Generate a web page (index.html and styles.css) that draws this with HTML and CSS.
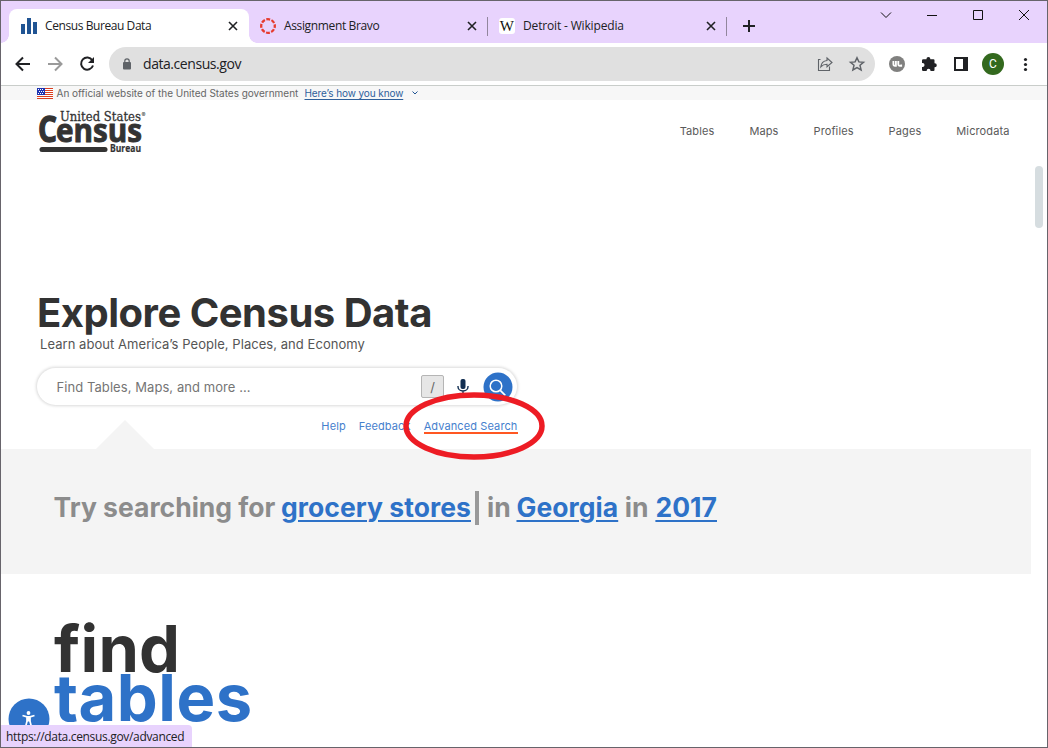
FILE: index.html
```html
<!DOCTYPE html>
<html lang="en">
<head>
<meta charset="utf-8">
<title>Census Bureau Data</title>
<link rel="stylesheet" href="styles.css">
</head>
<body>
<div class="window">
  <div class="tabstrip">
    <div class="tab tab-active">
      <svg class="favicon" viewBox="0 0 16 16"><path fill="#205493" d="M0 6h4v10H0zM6 0h4v16H6zM12 4h4v12h-4z"/></svg>
      <span class="tab-title t1">Census Bureau Data</span>
      <svg class="close" viewBox="0 0 10 10"><path d="M1 1l8 8M9 1l-8 8"/></svg>
    </div>
    <div class="tab">
      <svg class="favicon" viewBox="0 0 16 16"><circle cx="8" cy="8" r="6.8" fill="none" stroke="#e63b2e" stroke-width="2.300" stroke-dasharray="3.900 1.440" stroke-dashoffset="1.950"/></svg>
      <span class="tab-title t2">Assignment Bravo</span>
      <svg class="close" viewBox="0 0 10 10"><path d="M1 1l8 8M9 1l-8 8"/></svg>
      <i class="sep"></i>
    </div>
    <div class="tab">
      <span class="favicon wiki">W</span>
      <span class="tab-title t3">Detroit - Wikipedia</span>
      <svg class="close" viewBox="0 0 10 10"><path d="M1 1l8 8M9 1l-8 8"/></svg>
      <i class="sep"></i>
    </div>
    <svg class="plus" viewBox="0 0 12 12"><path d="M6 0v12M0 6h12" stroke="#202124" stroke-width="2"/></svg>
    <div class="controls">
      <svg viewBox="0 0 46 30"><path d="M18 12.500l5 5 5-5"/></svg>
      <svg viewBox="0 0 46 30"><path d="M18 15.500h10"/></svg>
      <svg viewBox="0 0 46 30"><path d="M18.500 10.500h9v9h-9z"/></svg>
      <svg viewBox="0 0 46 30"><path d="M18 10l10 10M28 10l-10 10"/></svg>
    </div>
  </div>
  <div class="toolbar">
    <svg class="tool" viewBox="0 0 32 32"><path fill="none" stroke="#202124" stroke-width="2" d="M23 16H10.500M16 9.500L9.500 16l6.500 6.500"/></svg>
    <svg class="tool" viewBox="0 0 32 32"><path fill="none" stroke="#9a9a9a" stroke-width="2" d="M9 16h12.500M16 9.500l6.500 6.500-6.500 6.500"/></svg>
    <svg class="tool" viewBox="0 0 32 32"><path fill="none" stroke="#202124" stroke-width="2" d="M21.300 12.200A6.100 6.100 0 1 0 22 17.500"/><path fill="#202124" d="M23 9v6h-6z"/></svg>
    <div class="omnibox">
      <svg class="lock" viewBox="0 0 10 12"><rect x="1" y="4" width="8" height="7.500" rx="1" fill="#5f6368"/><path d="M2.800 4.500V3a2.200 2.200 0 0 1 4.400 0v1.500" fill="none" stroke="#5f6368" stroke-width="1.200"/></svg>
      <span class="url">data.census.gov</span>
      <svg class="tool" viewBox="0 0 32 32"><path fill="none" stroke="#5f6368" stroke-width="1.100" d="M11.500 11.500H9.500v11h11v-4M18 10l5 4.500-5 4.200v-2.400c-3 0-4.500.7-6.200 2.600.4-3.600 2.300-5.900 6.200-6.400z"/></svg>
      <svg class="tool" viewBox="0 0 32 32"><path fill="none" stroke="#5f6368" stroke-width="1.500" d="M16 9.700l1.900 4.200 4.600.4-3.500 3 1.100 4.600-4.100-2.400-4.100 2.400 1.100-4.600-3.500-3 4.600-.4z"/></svg>
    </div>
    <svg class="tool" viewBox="0 0 32 32"><circle cx="16" cy="16" r="8" fill="#80807f"/><path fill="none" stroke="#fff" stroke-width="1.800" d="M12.400 13v3q0 1.900 1.600 1.900M14.900 13v4.900H13.800M17.300 13v3q0 1.900 1.600 1.900h1.300v-1.400"/></svg>
    <svg class="tool" viewBox="0 0 32 32"><path fill="#202124" d="M10.300 11.300h3.200v-.5a1.900 1.900 0 0 1 3.800 0v.5h3.200q1 0 1 1v2.900h.3a2 2 0 0 1 0 4h-.3v2.900q0 1-1 1h-3v-.5a1.900 1.900 0 0 0-3.800 0v.5h-3.400q-1.300 0-1.300-1.300v-2.900h.6a1.950 1.950 0 0 0 0-3.900H9v-2.400q0-1.300 1.300-1.300z"/></svg>
    <svg class="tool" viewBox="0 0 32 32"><path fill="#202124" fill-rule="evenodd" d="M9 9h14v14H9zM11 11v10h7V11z"/></svg>
    <div class="tool"><span class="avatar">C</span></div>
    <svg class="tool" viewBox="0 0 32 32"><g fill="#202124"><circle cx="16.500" cy="11.500" r="1.600"/><circle cx="16.500" cy="16.500" r="1.600"/><circle cx="16.500" cy="21.500" r="1.600"/></g></svg>
  </div>
  <div class="gov">
    <svg class="flag" viewBox="0 0 16 11"><path fill="#fff" d="M0 0h16v11H0z"/><path stroke="#db3e1f" d="M0 .5h16M0 2.500h16M0 4.500h16M0 6.500h16M0 8.500h16M0 10.500h16"/><path fill="#1e33b1" d="M0 0h8v7H0z"/><path stroke="#fff" stroke-dasharray="1 1" d="M1 1.500h6M2 3.500h5M1 5.500h6"/></svg>
    <span class="gov-text">An official website of the United States government</span>
    <a class="gov-link">Here’s how you know</a>
    <svg class="chev" viewBox="0 0 6 4"><path d="M.5.500L3 3 5.500.5" fill="none" stroke="#205493"/></svg>
  </div>
  <header class="site-head">
    <svg class="logo" viewBox="0 0 110 50" role="img" aria-label="United States Census Bureau">
      <text class="logo-us" x="22" y="16.500" textLength="81" lengthAdjust="spacingAndGlyphs">United States</text>
      <text class="logo-r" x="103.500" y="12.500">®</text>
      <text class="logo-c" x="0" y="38" textLength="19" lengthAdjust="spacingAndGlyphs">C</text>
      <text class="logo-census" x="18" y="38" textLength="86" lengthAdjust="spacingAndGlyphs">ensus</text>
      <text class="logo-b" x="72" y="47.700" textLength="31" lengthAdjust="spacingAndGlyphs">Bureau</text>
      <rect x="1.500" y="43" width="68" height="5" rx="2.500"/>
    </svg>
    <nav class="nav"><a>Tables</a><a>Maps</a><a>Profiles</a><a>Pages</a><a>Microdata</a></nav>
  </header>
  <main>
    <section class="hero">
      <h1>Explore Census Data</h1>
      <p class="sub">Learn about America’s People, Places, and Economy</p>
      <div class="search">
        <span class="placeholder">Find Tables, Maps, and more ...</span>
        <kbd>/</kbd>
        <svg class="mic" viewBox="0 0 12 16"><rect x="3.500" y="0" width="5" height="10" rx="2" fill="#112e51"/><path fill="none" stroke="#112e51" stroke-width="1.400" d="M1 7v.8a5 4.200 0 0 0 10 0V7M6 12v4"/></svg>
        <svg class="go" viewBox="0 0 30 30"><circle cx="15" cy="15" r="14.500" fill="#2e72c8"/><circle cx="13" cy="14" r="5.800" fill="none" stroke="#fff" stroke-width="1.500"/><path d="M17.300 18.300l5 5" stroke="#fff" stroke-width="1.700"/></svg>
      </div>
      <div class="links"><a>Help</a><a>Feedback</a><a class="adv">Advanced Search</a></div>
      <svg class="ring" viewBox="0 0 142 68"><ellipse cx="71" cy="34" rx="68" ry="31" fill="none" stroke="#ed1c24" stroke-width="5.500"/></svg>
    </section>
    <section class="band">
      <p class="try"><span class="w1">Try searching for</span><a class="w2">grocery stores</a><i class="caret"></i><span class="w3">in</span><a class="w4">Georgia</a><span class="w5">in</span><a class="w6">2017</a></p>
    </section>
    <section class="find"><div class="f1">find</div><div class="f2">tables</div></section>
  </main>
  <div class="scroll-thumb"></div>
  <svg class="access" viewBox="0 0 42 42"><circle cx="21" cy="21" r="20.500" fill="#2e72c8"/><circle cx="20.500" cy="15" r="1.900" fill="#fff"/><path fill="none" stroke="#fff" stroke-width="1.700" d="M14.500 17.500l4.500 1.400h3l4.500-1.400M19.100 19V23l-1.600 6M21.900 19V23l1.600 6"/><path fill="#fff" d="M18.500 18.500h4v5h-4z"/></svg>
  <div class="status">https://data.census.gov/advanced</div>
</div>
</body>
</html>
```
FILE: styles.css
```css
* { box-sizing: border-box; }
body { margin: 0; background: #fff; }
svg { display: block; flex: none; }
.window { position: relative; width: 1048px; height: 748px; overflow: hidden; border: 1px solid #67646b; background: #fff; font-family: Inter, sans-serif; }

.tabstrip { display: flex; height: 42px; padding: 8px 0 0 8px; background: #e8d3fd; font-family: "Open Sans", sans-serif; font-size: 12px; color: #202124; }
.tab { position: relative; display: flex; align-items: center; width: 239px; height: 34px; padding: 0 10px 0 12px; }
.tab-active { width: 240px; padding-right: 11px; margin-right: -1px; background: #fff; border-radius: 8px 8px 0 0; }
.tab-active::before, .tab-active::after { content: ""; position: absolute; bottom: 0; width: 8px; height: 8px; }
.tab-active::before { left: -8px; background: radial-gradient(circle at 0 0, transparent 7.5px, #fff 8px); }
.tab-active::after { right: -8px; background: radial-gradient(circle at 100% 0, transparent 7.5px, #fff 8px); }
.favicon { width: 16px; height: 16px; margin-right: 8px; }
.wiki { background: #fff; border-radius: 3px; font: 15px/16px "Liberation Serif", serif; text-align: center; text-indent: -0.500px; color: #111; }
.tab-title { flex: 1; white-space: nowrap; line-height: 16px; }
.t1 { letter-spacing: -0.420px; }
.t2 { letter-spacing: -0.360px; }
.t3 { letter-spacing: -0.160px; }
.close { width: 10px; height: 10px; fill: none; stroke: #202124; stroke-width: 1.600; }
.sep { position: absolute; right: -1px; top: 8px; width: 1px; height: 19px; background: #92869d; }
.plus { width: 12px; height: 12px; margin: 11px 0 0 17px; }
.controls { display: flex; margin: -9px 0 0 auto; height: 30px; }
.controls svg { width: 46px; height: 30px; fill: none; stroke: #111; }

.toolbar { display: flex; align-items: center; height: 43px; padding: 0 6px; border-bottom: 1px solid #c9cdca; }
.tool { width: 32px; height: 32px; flex: none; }
.omnibox { display: flex; align-items: center; flex: 1; height: 34px; margin: 0 6px; padding: 0 2px 0 13px; background: #e0e0e0; border-radius: 17px; }
.lock { width: 10px; height: 12px; }
.url { flex: 1; margin-left: 11px; font: 14px/20px "Open Sans", sans-serif; letter-spacing: -0.440px; color: #202124; }
.avatar { display: block; width: 22px; height: 22px; margin: 5px; border-radius: 50%; background: #33691e; color: #fff; font: 12px/22px Roboto, sans-serif; text-align: center; }

.gov { display: flex; align-items: center; height: 14px; padding-left: 36px; background: #f7f7f7; font-size: 10px; line-height: 14px; color: #666; white-space: nowrap; }
.flag { width: 16px; height: 11px; margin-right: 3.500px; }
.gov-text { letter-spacing: -0.020px; width: 248px; }
.gov-link { width: 107px; letter-spacing: -0.100px; color: #2f609b; text-decoration: underline; text-underline-offset: 2px; }
.chev { width: 6px; height: 4px; }

.site-head { display: flex; height: 63px; padding: 4px 37.500px 0 37px; }
.logo { width: 110px; height: 50px; overflow: visible; fill: #333; stroke: #333; stroke-width: 0; }
.logo-us { font: 13.500px "DejaVu Serif", serif; stroke-width: 0.300px; }
.logo-r { font: 6px Inter, sans-serif; }
.logo-c { font: bold 35.500px "Open Sans", sans-serif; stroke-width: 1.300px; }
.logo-census { font: bold 32px "Open Sans", sans-serif; stroke-width: 0.900px; }
.logo-b { font: bold 10px "Open Sans", sans-serif; stroke-width: 0.200px; }
.nav { display: flex; gap: 35px; margin-left: auto; padding-top: 19px; font-size: 11px; line-height: 16px; letter-spacing: 0.110px; color: #5a5a5a; }

.hero { position: relative; height: 286px; padding: 125px 0 0 36px; }
h1 { margin: 0; font-size: 40px; line-height: 50px; font-weight: 700; letter-spacing: -0.500px; color: #323232; white-space: nowrap; }
.sub { margin: -2px 0 0; padding: 0 0 0 3px; font-size: 13px; line-height: 16px; letter-spacing: 0.050px; color: #555; }
.search { display: flex; align-items: center; width: 480px; height: 37px; margin-top: 16px; padding: 0 4px 0 19.500px; border-radius: 19px; box-shadow: 0 0 3px 1px rgba(0,0,0,.15); }
.placeholder { flex: 1; padding-top: 1px; font-size: 13px; letter-spacing: 0.070px; color: #757575; }
kbd { width: 23px; height: 23px; border: 1px solid #b5b5b5; border-radius: 2px; background: #e6e6e6; color: #666; font: 13px/22px Inter, sans-serif; text-align: center; }
.mic { width: 12px; height: 16px; margin: 0 14px 0 13px; }
.go { width: 30px; height: 30px; }
.links { display: flex; gap: 13px; width: 480.500px; justify-content: flex-end; margin-top: 14px; font-size: 11px; line-height: 15px; letter-spacing: 0.110px; color: #4580cd; }
.adv { height: 15px; border-bottom: 2px solid #ff5722; }
.ring { position: absolute; left: 402px; top: 228.500px; width: 142px; height: 68px; z-index: 2; }

.band { position: relative; width: 1030px; height: 125px; padding: 40px 0 0 52.500px; background: #f4f4f4; }
.band::before { content: ""; position: absolute; left: 94px; top: -29px; width: 60px; height: 30px; background: #f4f4f4; clip-path: polygon(50% 0, 100% 100%, 0 100%); }
.try { display: flex; margin: 0; font-size: 26.500px; line-height: 36px; font-weight: 700; color: #8c8c8c; white-space: nowrap; }
.try a { letter-spacing: 0.050px; color: #2e72c8; text-decoration: underline; text-decoration-thickness: 2px; text-underline-offset: 3px; }
.w1 { width: 227.500px; }
.caret { width: 4px; height: 34px; margin: 2px 8px 0 4px; background: #999; }
.w3 { width: 29.500px; }
.w5 { margin: 0 7px 0 6.500px; }

.find { padding: 50px 0 0 53px; font-size: 65px; line-height: 49px; font-weight: 700; letter-spacing: 0.200px; color: #323232; }
.f2 { color: #2e72c8; letter-spacing: 0.500px; }

.scroll-thumb { position: absolute; left: 1034px; top: 165px; width: 8px; height: 62px; border-radius: 4px; background: #d6dde0; }
.access { position: absolute; left: 6.500px; top: 697px; width: 42px; height: 42px; }
.status { position: absolute; left: 0; bottom: 0; width: 191px; height: 22px; padding-left: 5px; border-radius: 0 4px 0 0; background: #e8d3fd; color: #202124; font: 12px/23px "Open Sans", sans-serif; letter-spacing: -0.330px; white-space: nowrap; }
```
